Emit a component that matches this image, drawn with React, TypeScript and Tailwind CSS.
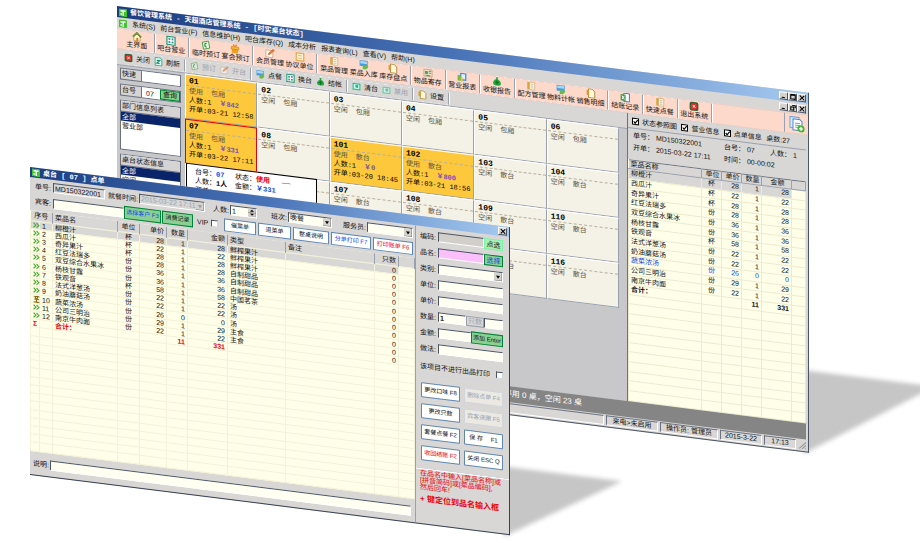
import React from 'react';
import clsx from 'clsx';

type IconName =
  | 'logo' | 'home' | 'grid' | 'calendar' | 'gift' | 'edit' | 'card' | 'book' | 'import' | 'page'
  | 'box' | 'chart' | 'money' | 'excel' | 'stop' | 'refresh' | 'monitor' | 'copy';

const Icon: React.FC<{ name: IconName; className?: string }> = ({ name, className = 'size-2' }) => (
  <svg viewBox="0 0 16 16" className={clsx('shrink-0', className)} aria-hidden="true">
    {name === 'logo' && (
      <>
        <rect width="16" height="16" rx="1" fill="#3fc52f" />
        <path d="M3 3h10v3H10v8H7V6H3z" fill="#fff" />
        <path d="M3 9h3v4H3z" fill="#d8ffd0" />
      </>
    )}
    {name === 'home' && (
      <>
        <path d="M3 8v7h10V8L8 3z" fill="#fff6c8" stroke="#a98a30" />
        <path d="M8 1 1 8l1.500 1L8 4l5.500 5L15 8z" fill="#7fa83a" stroke="#4f7020" />
        <path d="M7 10h3v5H7z" fill="#c9742c" />
      </>
    )}
    {name === 'grid' && (
      <>
        <rect x="1.500" y="1.500" width="13" height="13" fill="#fff" stroke="#2f9a7a" strokeWidth="2" />
        <path d="M4 4h3v3H4zM9 9h3v3H9z" fill="#27a35c" />
        <path d="M9 4h3v3H9zM4 9h3v3H4z" fill="#3d8fd0" />
      </>
    )}
    {name === 'calendar' && (
      <>
        <path d="M2 4 12 1l2 11-10 3z" fill="#e8fbe4" stroke="#4d9a4a" strokeWidth="1.500" />
        <path d="M9 5a3 3 0 1 0 0 6" fill="none" stroke="#2a9a3a" strokeWidth="2" />
      </>
    )}
    {name === 'gift' && (
      <>
        <path d="M3 8h10v7H3z" fill="#f2a01c" />
        <path d="M2 5h12v4H2z" fill="#f7bb38" stroke="#c97b0c" />
        <path d="M8 5C5 5 3 1 6 1c1 0 2 2 2 4 0-2 1-4 2-4 3 0 1 4-2 4z" fill="#e98a10" />
      </>
    )}
    {name === 'edit' && (
      <>
        <rect x="1.500" y="3.500" width="11" height="11" fill="#fff" stroke="#c98a5c" />
        <path d="m5 11 1-3 7-7 2 2-7 7z" fill="#e8772e" stroke="#b4551a" strokeWidth=".6" />
      </>
    )}
    {name === 'card' && (
      <>
        <rect x="2" y="2" width="12" height="12" fill="#fff4d8" stroke="#e8a94a" strokeWidth="2" />
        <path d="M5 6h6M5 10h6" stroke="#e2b878" strokeWidth="1.500" />
      </>
    )}
    {name === 'book' && (
      <>
        <path d="M2 2h4v12H2z" fill="#d9a441" />
        <path d="M6 2h8v12H6z" fill="#fffbe9" stroke="#c9a45c" />
        <path d="M8 5h4M8 8h4M8 11h4" stroke="#a8a088" />
      </>
    )}
    {name === 'import' && (
      <>
        <path d="M1 1h13v9H1z" fill="#4a9be0" />
        <path d="M2 2h11v4H2z" fill="#a6d8f8" />
        <path d="M6 15V9h5V6l4 5-4 4z" fill="#6bbb4a" />
      </>
    )}
    {name === 'page' && (
      <>
        <path d="M4 1h6l4 4v10H4z" fill="#fff8dc" stroke="#b08a3a" strokeWidth="1.500" />
        <path d="M1 3h4v8H1z" fill="#d89a34" />
      </>
    )}
    {name === 'box' && (
      <>
        <rect x="1.500" y="2.500" width="13" height="11" fill="#f2ead0" stroke="#a3936a" />
        <path d="M3 5h5v5H3z" fill="#5b9f62" />
        <path d="M9 5h4M9 8h4M4 12h8" stroke="#8a7a50" strokeWidth="1.500" />
      </>
    )}
    {name === 'chart' && (
      <>
        <path d="M5 1h10v12H5z" fill="#3f8ed8" />
        <path d="M7 3h6v8H7z" fill="#dff1ff" />
        <path d="M1 5h5v9H1z" fill="#7cb83a" />
        <path d="M6 8h3v7H6z" fill="#f4c430" />
      </>
    )}
    {name === 'money' && (
      <>
        <path d="M6 1h4l-1 3c4 2 6 5 5 8-1 3-11 3-12 0C1 9 3 6 7 4z" fill="#22a63c" />
        <path d="M5 9h6M8 6v7" stroke="#0d6a20" strokeWidth="1.500" />
      </>
    )}
    {name === 'excel' && (
      <>
        <path d="M6 1h9v13H6z" fill="#fff" stroke="#3a78c8" strokeWidth="1.500" />
        <path d="M1 3h8v10H1z" fill="#3d9a3f" />
        <path d="m3 5 4 6M7 5l-4 6" stroke="#fff" strokeWidth="1.500" />
      </>
    )}
    {name === 'stop' && (
      <>
        <rect x="1" y="1" width="14" height="14" rx="3" fill="#3c5f38" />
        <circle cx="8" cy="8" r="5" fill="#e22f2a" />
        <path d="m6 6 4 4M10 6l-4 4" stroke="#fff" strokeWidth="1.500" />
      </>
    )}
    {name === 'refresh' && (
      <>
        <path d="M2 1h9l3 3v11H2z" fill="#dff6ee" stroke="#37a08a" strokeWidth="1.500" />
        <path d="M5 6h5L5 11h5" fill="none" stroke="#148a6a" strokeWidth="2" />
      </>
    )}
    {name === 'monitor' && (
      <>
        <rect x="1" y="2" width="14" height="12" fill="#22c08a" />
        <rect x="3" y="4" width="10" height="8" fill="#d8fff0" />
        <path d="M6 5h5v5H6z" fill="#3aa8a0" />
      </>
    )}
    {name === 'copy' && (
      <>
        <path d="M1 1h9v11H1z" fill="#dceafc" stroke="#6f9fd8" />
        <path d="M4 3h7l2 2v9H4z" fill="#fff" stroke="#4a86d0" />
        <path d="M6 7h5M6 9h5M6 11h3" stroke="#6fa6e4" />
        <circle cx="12" cy="12" r="3.600" fill="#49b53a" />
        <path d="M12 10v4M10 12h4" stroke="#fff" strokeWidth="1.300" />
      </>
    )}
  </svg>
);

const WinButton: React.FC<{ kind: 'min' | 'max' | 'restore' | 'close'; label: string }> = ({ kind, label }) => (
  <button aria-label={label} className="flex h-2 w-[9px] items-center justify-center border border-t-white border-l-white border-r-gray-600 border-b-gray-600 bg-[#d6d3ce]">
    <svg viewBox="0 0 8 8" className="size-[6px]" fill="none" stroke="#000" strokeWidth="1.400">
      {kind === 'min' && <path d="M1 6.500h4" />}
      {kind === 'max' && <path d="M1 1h6v6H1zM1 2h6" />}
      {kind === 'restore' && <path d="M3 1h4v3M1 3h4v4H1z" />}
      {kind === 'close' && <path d="m1 1 6 6M7 1 1 7" />}
    </svg>
  </button>
);

const menus = ['系统(S)', '前台营业(F)', '信息维护(H)', '吧台库存(Q)', '成本分析', '报表查询(L)', '查看(V)', '帮助(H)'];

const mainTools: { icon: IconName; label: string }[][] = [
  [{ icon: 'home', label: '主界面' }],
  [{ icon: 'grid', label: '吧台营业' }],
  [{ icon: 'calendar', label: '临时预订' }, { icon: 'gift', label: '宴会预订' }],
  [{ icon: 'edit', label: '会员管理' }, { icon: 'card', label: '协议单位' }],
  [{ icon: 'book', label: '菜品管理' }, { icon: 'import', label: '菜品入库' }, { icon: 'page', label: '库存盘点' }],
  [{ icon: 'box', label: '物品寄存' }],
  [{ icon: 'chart', label: '营业报表' }],
  [{ icon: 'money', label: '收银报告' }],
  [{ icon: 'book', label: '配方管理' }, { icon: 'import', label: '物料计帐' }, { icon: 'page', label: '销售明细' }],
  [{ icon: 'excel', label: '结账记录' }],
  [{ icon: 'book', label: '快速点餐' }],
  [{ icon: 'stop', label: '退出系统' }],
];

const subTools: { icon: IconName; label: string; disabled?: boolean }[][] = [
  [{ icon: 'stop', label: '关闭' }, { icon: 'refresh', label: '刷新' }],
  [{ icon: 'calendar', label: '预订', disabled: true }, { icon: 'edit', label: '开台', disabled: true }],
  [{ icon: 'import', label: '点餐' }, { icon: 'grid', label: '换台' }, { icon: 'money', label: '结帐' }],
  [{ icon: 'monitor', label: '清台' }, { icon: 'monitor', label: '禁用', disabled: true }],
  [{ icon: 'page', label: '设置' }],
];

interface Tile {
  no: string;
  type: string;
  amount?: string;
  opened?: string;
  selected?: boolean;
}

const tiles: Tile[] = [
  { no: '01', type: '包厢', amount: '842', opened: '03-21 12:58' },
  { no: '02', type: '包厢' },
  { no: '03', type: '包厢' },
  { no: '04', type: '包厢' },
  { no: '05', type: '包厢' },
  { no: '06', type: '包厢' },
  { no: '07', type: '包厢', amount: '331', opened: '03-22 17:11', selected: true },
  { no: '08', type: '包厢' },
  { no: '101', type: '散台', amount: '0', opened: '03-20 18:45' },
  { no: '102', type: '散台', amount: '800', opened: '03-21 18:56' },
  { no: '103', type: '散台' },
  { no: '104', type: '散台' },
  { no: '105', type: '散台' },
  { no: '106', type: '散台' },
  { no: '107', type: '散台' },
  { no: '108', type: '散台' },
  { no: '109', type: '散台' },
  { no: '110', type: '散台' },
  { no: '111', type: '散台' },
  { no: '112', type: '散台' },
  { no: '113', type: '散台' },
  { no: '114', type: '散台' },
  { no: '115', type: '散台' },
  { no: '116', type: '散台' },
];

const dishes = [
  { name: '柳橙汁', unit: '杯', price: 28, qty: 1, total: 28, type: '鲜榨果汁' },
  { name: '西瓜汁', unit: '杯', price: 22, qty: 1, total: 22, type: '鲜榨果汁' },
  { name: '奇异果汁', unit: '杯', price: 28, qty: 1, total: 28, type: '鲜榨果汁' },
  { name: '红豆法瑞多', unit: '份', price: 28, qty: 1, total: 28, type: '自制甜品' },
  { name: '双豆综合水果冰', unit: '份', price: 36, qty: 1, total: 36, type: '自制甜品' },
  { name: '杨枝甘露', unit: '份', price: 36, qty: 1, total: 36, type: '自制甜品' },
  { name: '铁观音', unit: '杯', price: 58, qty: 1, total: 58, type: '中国茗茶' },
  { name: '法式洋葱汤', unit: '份', price: 22, qty: 1, total: 22, type: '汤' },
  { name: '奶油蘑菇汤', unit: '份', price: 22, qty: 1, total: 22, type: '汤' },
  { name: '蔬菜浓汤', unit: '份', price: 26, qty: 0, total: 0, type: '汤' },
  { name: '公司三明治', unit: '份', price: 29, qty: 1, total: 29, type: '主食' },
  { name: '南京牛肉面', unit: '份', price: 22, qty: 1, total: 22, type: '主食' },
];

const TableTile: React.FC<{ tile: Tile }> = ({ tile }) => (
  <div
    className={clsx(
      "relative h-[45px] border font-['Liberation_Mono','Noto_Sans_CJK_SC',monospace]",
      tile.opened ? 'bg-[#fdc83c]' : 'bg-[#f4f1e6]',
      tile.selected ? 'border-red-600' : 'border-t-white border-l-white border-r-gray-400 border-b-gray-400',
    )}
  >
    <div className="mb-px h-[11px] border-b border-dashed border-[#b8b09a] pl-[3px] text-[8px] leading-[11px] font-bold text-black">{tile.no}</div>
    <div className="flex gap-2 pl-[3px] whitespace-nowrap text-[#5c5644]">
      <span>{tile.opened ? '使用' : '空闲'}</span>
      <span>{tile.type}</span>
    </div>
    {tile.opened && (
      <div className="pl-[3px] whitespace-nowrap text-black">
        <div className="flex gap-2">
          <span>人数:1</span>
          <span className="font-bold text-[#7a50b4]">￥{tile.amount}</span>
        </div>
        <div>开单:{tile.opened}</div>
      </div>
    )}
    {tile.selected && (
      <div className="absolute top-full left-0 z-10 grid h-[42px] w-[131px] grid-cols-[36px_1fr] content-start gap-x-1 border border-black bg-white px-2 pt-[3px] whitespace-nowrap text-black">
        <span>台号：<b className="text-blue-700">07</b></span>
        <span>状态：<b className="text-red-600">使用</b><span className="ml-3 text-red-600">——</span></span>
        <span>人数：<b>1人</b></span>
        <span>金额：<b className="text-blue-700">￥331</b></span>
        <span>开单：</span>
      </div>
    )}
  </div>
);

const ListBox: React.FC<{ title: string; items: string[] }> = ({ title, items }) => (
  <section className="h-[50px] border border-gray-500 bg-white">
    <h2 className="h-[11px] border-b border-gray-500 bg-[#d6d3d3] pl-px leading-[10px]">{title}</h2>
    <ul>
      {items.map((item, i) => (
        <li key={item} className={clsx('pl-px', i === 0 && 'bg-[#0a246a] text-white')}>{item}</li>
      ))}
    </ul>
  </section>
);

const Sidebar = () => (
  <aside className="flex w-[68px] shrink-0 flex-col gap-1 pt-[2px] pr-1 pl-[3px]">
    <div className="flex h-3 border border-gray-500 bg-[#d6d3d3]">
      <label htmlFor="quick" className="w-5 pl-px leading-[10px]">快速</label>
      <input id="quick" className="min-w-0 flex-1 border-l border-gray-500 bg-white" />
    </div>
    <div className="flex h-3 border border-gray-500 bg-[#d6d3d3]">
      <label htmlFor="tableNo" className="w-5 shrink-0 pl-px leading-[10px]">台号</label>
      <input id="tableNo" defaultValue="07" className="w-0 min-w-0 flex-1 border-l border-gray-500 bg-white px-1" />
      <button className="w-5 border border-green-700 bg-[#86cf8a] leading-[8px]">查询</button>
    </div>
    <ListBox title="部门信息列表" items={['全部', '营业部']} />
    <ListBox title="桌台状态信息" items={['全部', '空闲', '使用']} />
  </aside>
);

const Check: React.FC<{ id: string; label: string }> = ({ id, label }) => (
  <label htmlFor={id} className="flex items-center gap-[3px]">
    <span className="relative size-[7px]">
      <input id={id} type="checkbox" defaultChecked className="block size-[7px] appearance-none border border-black bg-white" />
      <svg viewBox="0 0 8 8" className="pointer-events-none absolute inset-0 size-[7px]" fill="none" stroke="#000" strokeWidth="1.300">
        <path d="m2 4 1.500 2L6.500 2" />
      </svg>
    </span>
    {label}
  </label>
);

const InfoPanel = () => (
  <section className="flex w-[181px] shrink-0 flex-col border-l border-gray-500 bg-[#d9d7d5] pr-[2px]">
    <div className="flex h-[15px] items-center justify-between border-b border-gray-400 pr-4 pl-1 whitespace-nowrap">
      <Check id="showRef" label="状态参照图" />
      <Check id="showBiz" label="营业信息" />
      <Check id="showOrder" label="点单信息" />
      <span>桌数:27</span>
    </div>
    <div className="grid h-[31px] grid-cols-[91px_46px_1fr] content-start gap-y-[3px] pt-[2px] pl-[5px] whitespace-nowrap">
      <span>单号： MD150322001</span>
      <span>台号： 07</span>
      <span>人数： 1</span>
      <span>开单： 2015-03-22 17:11</span>
      <span className="col-span-2">时间： 00-00:02</span>
    </div>
    <table className="h-[242px] w-full table-fixed border-collapse border-t border-gray-500 bg-[#ffffe9] leading-[8px]">
      <colgroup>
        <col />
        <col className="w-[20px]" />
        <col className="w-[20px]" />
        <col className="w-[20px]" />
        <col className="w-[30px]" />
        <col className="w-[14px]" />
      </colgroup>
      <thead>
        <tr className="h-[9px] bg-[#d9d7d5] [&>th]:border-r [&>th]:border-b [&>th]:border-gray-400 [&>th]:p-0 [&>th]:pl-[2px] [&>th]:font-normal [&>th]:whitespace-nowrap">
          <th className="text-left">菜品名称</th>
          <th>单位</th>
          <th>单价</th>
          <th>数量</th>
          <th>金额</th>
          <th />
        </tr>
      </thead>
      <tbody className="[&_td]:border [&_td]:border-[#ecebd0] [&_td]:p-0 [&_td]:px-[2px] [&_td]:whitespace-nowrap">
        {dishes.map((d, i) => (
          <tr key={d.name} className={clsx('h-[9px]', i === 0 && 'bg-[#d9d7d5]', d.qty === 0 && 'text-blue-700')}>
            <td>{d.name}</td>
            <td className="text-center">{d.unit}</td>
            <td className="text-right">{d.price}</td>
            <td className="text-right">{d.qty}</td>
            <td className="text-right">{d.total}</td>
            <td className="bg-[#ffffe9]" />
          </tr>
        ))}
        <tr className="h-[9px] font-bold">
          <td>合计：</td>
          <td />
          <td />
          <td className="text-right">11</td>
          <td className="text-right">331</td>
          <td />
        </tr>
        {Array.from({ length: 11 }, (_, i) => (
          <tr key={i} className="h-[9px]"><td /><td /><td /><td /><td /><td /></tr>
        ))}
      </tbody>
    </table>
  </section>
);

const Shadow: React.FC<{ points: string }> = ({ points }) => (
  <svg className="pointer-events-none absolute bottom-0 left-full h-[90px] w-[130px] overflow-visible" viewBox="0 0 130 90" aria-hidden="true">
    <polygon points={points} fill="#c6c6c6" className="blur-[2px]" />
  </svg>
);

const MainWindow = () => (
  <div className="absolute top-[6px] right-[111px] left-[117px] origin-top-left skew-y-[7.15deg]">
    <Shadow points="-6,8 126,8 -6,92" />
    <div className="relative flex flex-col border-r border-b border-gray-600 bg-[#d9d7d5]">
      <header className="flex h-[11px] items-center gap-[3px] bg-linear-to-r from-[#1c3c80] via-[#4a74b8] to-[#a6caf0] pr-[2px] pl-[2px] text-white">
        <Icon name="logo" />
        <h1 className="flex-1 font-['Liberation_Mono','Noto_Sans_CJK_SC',monospace] font-bold whitespace-nowrap">餐饮管理系统 - 天超酒店管理系统 - [时实桌台状态]</h1>
        <div className="flex">
          <WinButton kind="min" label="最小化" />
          <WinButton kind="max" label="最大化" />
          <WinButton kind="close" label="关闭" />
        </div>
      </header>
      <nav className="flex h-[11px] items-center gap-[5px] pr-[2px] pl-[2px] whitespace-nowrap">
        <Icon name="logo" />
        {menus.map((m) => <button key={m} className="leading-[9px]">{m}</button>)}
        <div className="ml-auto flex">
          <WinButton kind="min" label="最小化子窗口" />
          <WinButton kind="restore" label="还原子窗口" />
          <WinButton kind="close" label="关闭子窗口" />
        </div>
      </nav>
      <div className="flex h-[21px] border-y border-[#e6cfc8] bg-[#fdd9cb] pl-[3px]">
        {mainTools.map((group) => (
          <div key={group[0].label} style={{ flexGrow: group.length }} className="flex basis-0 border-r border-gray-400 px-[2px] shadow-[1px_0_0_#fff]">
            {group.map((tool) => (
              <button key={tool.label} className="flex flex-1 basis-0 flex-col items-center whitespace-nowrap">
                <Icon name={tool.icon} className="size-[10px]" />
                <span className="leading-[7px]">{tool.label}</span>
              </button>
            ))}
          </div>
        ))}
        <div className="ml-[72px] flex w-[24px] shrink-0 items-center justify-center border-l border-gray-400">
          <Icon name="copy" className="size-4" />
        </div>
      </div>
      <div className="flex bg-[#c8c8ca]">
        <div className="flex min-w-0 flex-1 flex-col">
          <div className="flex h-4 items-center border-b border-gray-400 bg-[#d9d7d5] pl-[7px]">
            {subTools.map((group) => (
              <div key={group[0].label} className="mr-[5px] flex h-3 border-r border-gray-400 shadow-[1px_0_0_#fff]">
                {group.map((tool) => (
                  <button key={tool.label} disabled={tool.disabled} className={clsx('flex w-[30px] items-center gap-[3px] whitespace-nowrap', tool.disabled && 'text-gray-400')}>
                    <Icon name={tool.icon} className={clsx('size-[9px]', tool.disabled && 'opacity-60')} />
                    {tool.label}
                  </button>
                ))}
              </div>
            ))}
          </div>
          <div className="flex">
            <Sidebar />
            <main className="mr-2 grid flex-1 grid-cols-6 content-start">
              {tiles.map((t) => <TableTile key={t.no} tile={t} />)}
            </main>
          </div>
        </div>
        <InfoPanel />
      </div>
      <p className="mr-[2px] h-4 bg-[#858585] pl-[305px] text-[8px] leading-4 whitespace-nowrap text-white">订桌 0 桌，使用 4 桌，停用 0 桌，空闲 23 桌</p>
      <footer className="flex h-3 items-center justify-end gap-[2px] pr-[2px] text-center whitespace-nowrap [&>span]:h-[10px] [&>span]:border [&>span]:border-t-gray-500 [&>span]:border-l-gray-500 [&>span]:border-r-white [&>span]:border-b-white [&>span]:leading-[8px]">
        <span className="flex-1" />
        <span className="w-[52px]">来电&gt;未启用</span>
        <span className="w-[58px]">操作员: 管理员</span>
        <span className="w-[42px]">2015-3-22</span>
        <span className="w-[32px]">17:13</span>
        <svg viewBox="0 0 8 8" className="size-2" stroke="#999"><path d="M1 8 8 1M4 8l4-4M7 8l1-1" /></svg>
      </footer>
    </div>
  </div>
);

const fieldBase = 'h-[10px] min-w-0 border border-t-gray-600 border-l-gray-600 border-r-white border-b-white px-px leading-[8px]';

const Drop: React.FC<{ id: string; options: string[]; className?: string; disabled?: boolean }> = ({ id, options, className, disabled }) => (
  <span className={clsx('relative flex', className)}>
    <select id={id} disabled={disabled} className={clsx(fieldBase, 'w-full appearance-none', disabled ? 'bg-[#d9d7d5] text-gray-400 opacity-100' : 'bg-[#fffff2]')}>
      {options.map((o) => <option key={o}>{o}</option>)}
    </select>
    <svg viewBox="0 0 8 8" className="pointer-events-none absolute top-px right-px size-2">
      <path d="M0 0h8v8H0z" fill="#d6d3ce" />
      <path d="M0 8h8V0" fill="none" stroke="#777" />
      <path d="M2 3h4L4 6z" fill={disabled ? '#999' : '#000'} />
    </svg>
  </span>
);

const OrderForm = () => (
  <div className="flex h-[33px] flex-col justify-center gap-1 pl-[5px] whitespace-nowrap">
    <div className="flex items-center [&>label]:shrink-0">
      <label htmlFor="billNo" className="w-[18px]">单号:</label>
      <input id="billNo" readOnly defaultValue="MD150322001" className={clsx(fieldBase, 'w-[52px] shrink-0 bg-[#d9d7d5]')} />
      <label htmlFor="mealTime" className="ml-[3px] w-[31px]">就餐时间:</label>
      <Drop id="mealTime" disabled options={['2015-03-22 17:11']} className="w-[66px]" />
      <label htmlFor="people" className="ml-2 w-[17px]">人数:</label>
      <span className="relative flex w-[27px]">
        <input id="people" defaultValue="1" className={clsx(fieldBase, 'w-full bg-[#fffff2]')} />
        <svg viewBox="0 0 8 8" className="pointer-events-none absolute top-px right-px size-2">
          <path d="M0 0h8v8H0z" fill="#d6d3ce" />
          <path d="M0 4h8M0 8h8V0" fill="none" stroke="#777" strokeWidth=".6" />
          <path d="M2 3h4L4 1zM2 5h4L4 7z" />
        </svg>
      </span>
      <label htmlFor="shift" className="ml-[14px] w-[17px]">班次:</label>
      <Drop id="shift" options={['晚餐']} className="w-[44px]" />
      <label htmlFor="waiter" className="ml-[11px] w-[24px]">服务员:</label>
      <Drop id="waiter" options={['']} className="w-[46px]" />
    </div>
    <div className="flex h-[13px] items-center text-[6px] [&>*]:shrink-0 [&>button]:h-[13px] [&>button]:border">
      <label htmlFor="guest" className="w-[18px] text-[7px]">宾客:</label>
      <input id="guest" className={clsx(fieldBase, 'w-[71px] bg-[#fffff2]')} />
      <button className="w-[37px] border-green-700 bg-[#8ad094] text-blue-700">选择客户 F3</button>
      <button className="ml-px w-[31px] border-green-700 bg-[#8ad094]">消费记录</button>
      <label htmlFor="vip" className="ml-1 w-[14px] text-[7px]">VIP</label>
      <input id="vip" type="checkbox" className="mr-[6px] size-[7px] appearance-none border border-t-gray-600 border-l-gray-600 border-r-gray-300 border-b-gray-300 bg-white" />
      <button className="w-[32px] border-[#5f86b0] bg-white">催菜单</button>
      <button className="ml-[2px] w-[33px] border-[#5f86b0] bg-white">退菜单</button>
      <button className="ml-[2px] w-[36px] border-[#5f86b0] bg-white">整桌说明</button>
      <button className="ml-[2px] w-[40px] border-[#5f86b0] bg-white text-blue-700">分单打印 F7</button>
      <button className="ml-[2px] w-[40px] border-[#5f86b0] bg-white text-red-600">打印账单 F6</button>
    </div>
  </div>
);

const RowMark: React.FC<{ last?: boolean }> = ({ last }) => (
  <svg viewBox="0 0 12 12" className="size-[7px]" fill="none" strokeWidth="2">
    {last ? <path d="M1 1h10M2 6h8M1 11h10M3 1l3 5 3-5M6 6v5" stroke="#8a6a10" /> : <path d="m1 2 4 4-4 4M6 2l4 4-4 4" stroke="#4aa82e" />}
  </svg>
);

const OrderTable = () => (
  <table className="h-[241px] w-full table-fixed border-collapse bg-[#ffffe9] leading-[7px]">
    <colgroup>
      <col className="w-[9px]" />
      <col className="w-[13px]" />
      <col className="w-[65px]" />
      <col className="w-[22px]" />
      <col className="w-[27px]" />
      <col className="w-[21px]" />
      <col className="w-[40px]" />
      <col className="w-[58px]" />
      <col />
      <col className="w-[24px]" />
      <col className="w-[16px]" />
    </colgroup>
    <thead>
      <tr className="h-[10px] bg-[#d9d7d5] [&>th]:border-r [&>th]:border-gray-400 [&>th]:p-0 [&>th]:px-[2px] [&>th]:font-normal [&>th]:whitespace-nowrap">
        <th colSpan={2}>序号</th>
        <th className="text-left">菜品名</th>
        <th>单位</th>
        <th className="text-right">单价</th>
        <th className="text-right">数量</th>
        <th className="text-right">金额</th>
        <th className="text-left">类型</th>
        <th className="text-left">备注</th>
        <th className="text-right">只数</th>
        <th />
      </tr>
    </thead>
    <tbody className="[&_td]:border [&_td]:border-[#f3f2d8] [&_td]:p-0 [&_td]:px-[2px] [&_td]:whitespace-nowrap">
      {dishes.map((d, i) => (
        <tr key={d.name} className={clsx('h-2', i === 0 && 'bg-[#d9d7d5]')}>
          <td><RowMark last={i === 9} /></td>
          <td>{i + 1}</td>
          <td>{d.name}</td>
          <td className="text-center">{d.unit}</td>
          <td className="text-right">{d.price}</td>
          <td className="text-right">{d.qty}</td>
          <td className="text-right">{d.total}</td>
          <td>{d.type}</td>
          <td />
          <td className="text-right">0</td>
          <td className="bg-[#ffffe9]" />
        </tr>
      ))}
      <tr className="h-2 font-bold text-red-600">
        <td>Σ</td>
        <td />
        <td>合计：</td>
        <td />
        <td />
        <td className="text-right">11</td>
        <td className="text-right">331</td>
        <td /><td /><td /><td />
      </tr>
      {Array.from({ length: 15 }, (_, i) => (
        <tr key={i} className="h-2"><td /><td /><td /><td /><td /><td /><td /><td /><td /><td /><td /></tr>
      ))}
    </tbody>
  </table>
);

const actions = [
  { label: '更改口味 F8', className: 'border-[#5f86b0] bg-white' },
  { label: '删除点单 F4', className: 'border-gray-300 bg-[#ebe9e2] text-gray-400', disabled: true },
  { label: '更改只数', className: 'border-[#5f86b0] bg-white' },
  { label: '宾客送赠 F5', className: 'border-gray-300 bg-[#ebe9e2] text-gray-400', disabled: true },
  { label: '套餐点餐 F2', className: 'border-[#5f86b0] bg-white' },
  { label: '保 存　 F1', className: 'border-[#5f86b0] bg-white' },
  { label: '收回结账 F2', className: 'border-[#5f86b0] bg-white text-red-600' },
  { label: '关闭 ESC Q', className: 'border-[#5f86b0] bg-white' },
];

const Field: React.FC<{ id: string; label: string; children: React.ReactNode }> = ({ id, label, children }) => (
  <div className="flex h-4 items-center">
    <label htmlFor={id} className="w-[18px] shrink-0 whitespace-nowrap">{label}:</label>
    {children}
  </div>
);

const EntryPanel = () => (
  <aside className="w-[94px] shrink-0 border-l border-gray-400 pt-px">
    <div className="pr-[6px] pl-1">
      <Field id="code" label="编码">
        <input id="code" className={clsx(fieldBase, 'flex-1 bg-[#d2cfca]')} />
        <button className="h-[11px] w-[19px] border border-green-300 bg-[#a9f0b4]">点选</button>
      </Field>
      <Field id="dish" label="品名">
        <input id="dish" className={clsx(fieldBase, 'flex-1 bg-[#fbc0fb]')} />
        <button className="h-[11px] w-[19px] border border-green-700 bg-[#8ad094] text-blue-700">选择</button>
      </Field>
      <Field id="category" label="类别"><Drop id="category" options={['']} className="flex-1" /></Field>
      <Field id="unit" label="单位"><input id="unit" className={clsx(fieldBase, 'flex-1 bg-[#fffff2]')} /></Field>
      <Field id="price" label="单价"><input id="price" className={clsx(fieldBase, 'flex-1 bg-[#fffff2]')} /></Field>
      <Field id="qty" label="数量">
        <input id="qty" defaultValue="1" className={clsx(fieldBase, 'flex-1 bg-[#fffff2] font-bold')} />
        <label htmlFor="pieces" className="h-[10px] w-[18px] border border-gray-400 text-center leading-[8px] text-gray-400">只数</label>
        <input id="pieces" className={clsx(fieldBase, 'w-[19px] bg-[#fffff2]')} />
      </Field>
      <Field id="sum" label="金额">
        <input id="sum" className={clsx(fieldBase, 'flex-1 bg-[#fffff2]')} />
        <button className="h-3 w-[32px] border border-green-700 bg-[#8ad094] text-[6px] whitespace-nowrap">添加 Enter</button>
      </Field>
      <Field id="method" label="做法"><input id="method" className={clsx(fieldBase, 'flex-1 bg-[#fffff2]')} /></Field>
      <div className="mt-[2px] flex h-4 items-center justify-between">
        <label htmlFor="noPrint" className="whitespace-nowrap">该项目不进行出品打印</label>
        <input id="noPrint" type="checkbox" className="size-[7px] appearance-none border border-t-gray-600 border-l-gray-600 border-r-gray-300 border-b-gray-300 bg-white" />
      </div>
    </div>
    <div className="grid grid-cols-2 gap-x-1 gap-y-[6px] border-y border-gray-300 pt-2 pr-[6px] pb-[7px] pl-[5px] text-[6px] shadow-[0_1px_0_#fff]">
      {actions.map((a) => (
        <button key={a.label} disabled={a.disabled} className={clsx('h-[15px] rounded-[1px] border whitespace-nowrap', a.className)}>{a.label}</button>
      ))}
    </div>
    <p className="pt-px pl-1 leading-[7px] whitespace-nowrap text-red-600">
      在品名中输入[菜品名称]或<br />[拼音简码]或[菜品编码],<br />然后回车!
    </p>
    <p className="pt-1 pl-1 text-[8px] font-bold whitespace-nowrap text-red-600">+ 键定位到品名输入框</p>
  </aside>
);

const OrderWindow = () => (
  <div className="absolute top-[167px] right-[410px] left-[30px] z-20 origin-top-left skew-y-[7.15deg]">
    <Shadow points="-6,22 112,22 -6,92" />
    <div className="relative border-r border-b border-gray-700 bg-[#d9d7d5]">
      <header className="flex h-[10px] items-center gap-[3px] bg-linear-to-r from-[#1c3c80] via-[#4a74b8] to-[#a6caf0] px-[2px] text-white">
        <Icon name="logo" />
        <h2 className="flex-1 font-['Liberation_Mono','Noto_Sans_CJK_SC',monospace] font-bold">桌台 [ 07 ] 点单</h2>
        <WinButton kind="close" label="关闭点单" />
      </header>
      <div className="flex">
        <div className="min-w-0 flex-1">
          <OrderForm />
          <OrderTable />
          <div className="flex h-[23px] items-center pr-1 pl-[3px]">
            <label htmlFor="note" className="w-[17px] whitespace-nowrap">说明:</label>
            <input id="note" className={clsx(fieldBase, 'flex-1 bg-[#fffff2]')} />
          </div>
        </div>
        <EntryPanel />
      </div>
    </div>
  </div>
);

export default function App() {
  return (
    <div className="relative min-h-screen overflow-hidden bg-white font-['Liberation_Sans','Noto_Sans_CJK_SC',sans-serif] text-[7px] leading-[9px] text-[#111]">
      <MainWindow />
      <OrderWindow />
    </div>
  );
}
